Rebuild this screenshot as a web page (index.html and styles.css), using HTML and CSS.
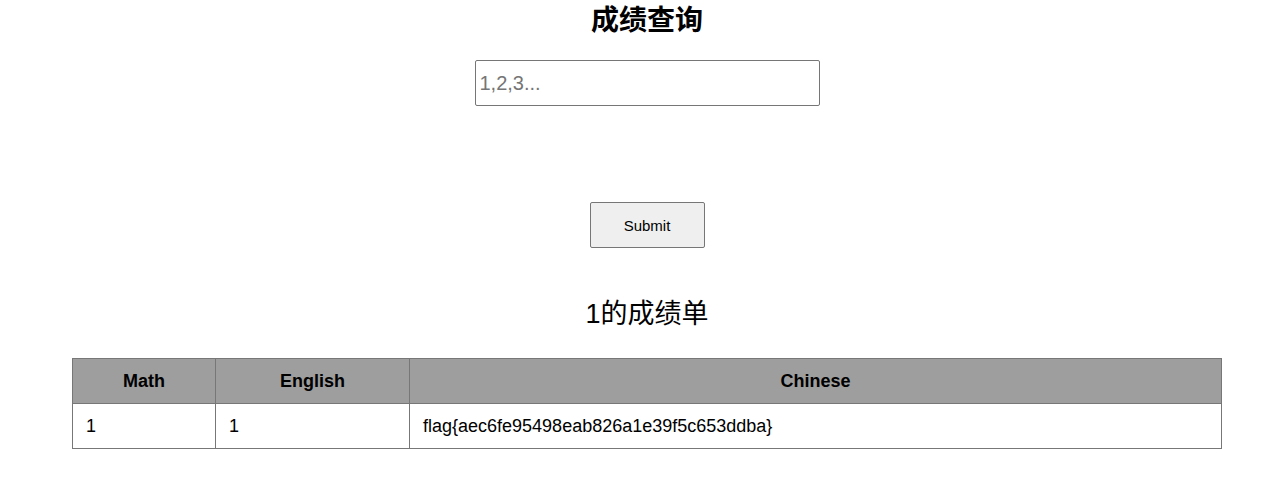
FILE: index.html
```html
<!DOCTYPE html>
<html lang="zh">
<head>
  <meta charset="UTF-8">
  <title>成绩查询</title>
  <link rel="stylesheet" href="styles.css">
</head>
<body>
  <div class="wrap">
    <form class="query">
      <h1>成绩查询</h1>
      <input type="text" name="id" placeholder="1,2,3...">
      <button type="button">Submit</button>
    </form>
    <h2 class="report-title">1的成绩单</h2>
    <table class="scores">
      <tr>
        <th class="col-math">Math</th>
        <th class="col-english">English</th>
        <th>Chinese</th>
      </tr>
      <tr>
        <td>1</td>
        <td>1</td>
        <td>flag{aec6fe95498eab826a1e39f5c653ddba}</td>
      </tr>
    </table>
  </div>
</body>
</html>
```

FILE: styles.css
```css
* {
  margin: 0;
  padding: 0;
  box-sizing: border-box;
}
body {
  font-family: "Liberation Sans", Arial, "Noto Sans CJK SC", sans-serif;
  color: #000;
  background: #fff;
  padding-left: 12px;
}
.wrap {
  display: flex;
  flex-direction: column;
  align-items: center;
}
.query {
  display: flex;
  flex-direction: column;
  align-items: center;
}
.query h1 {
  font-size: 28px;
  font-weight: bold;
  line-height: 40px;
  margin-top: 1px;
}
.query input {
  width: 345px;
  height: 46px;
  margin-top: 19px;
  padding: 0 4px;
  font-family: inherit;
  font-size: 20px;
  border: 1px solid #767676;
  border-radius: 2px;
}
.query input::placeholder {
  color: #757575;
}
.query button {
  width: 115px;
  height: 46px;
  margin-top: 96px;
  font-family: inherit;
  font-size: 15px;
  background: #efefef;
  border: 1px solid #767676;
  border-radius: 2px;
  color: #000;
}
.report-title {
  font-size: 27px;
  font-weight: normal;
  line-height: 36px;
  margin-top: 48px;
}
.scores {
  width: 1150px;
  margin-top: 26px;
  border-collapse: collapse;
  font-size: 18px;
}
.scores th,
.scores td {
  border: 1px solid #777;
  height: 45px;
}
.scores th {
  background: #9e9e9e;
  font-weight: bold;
  text-align: center;
}
.scores td {
  text-align: left;
  padding-left: 13px;
}
.col-math {
  width: 143px;
}
.col-english {
  width: 194px;
}
```
